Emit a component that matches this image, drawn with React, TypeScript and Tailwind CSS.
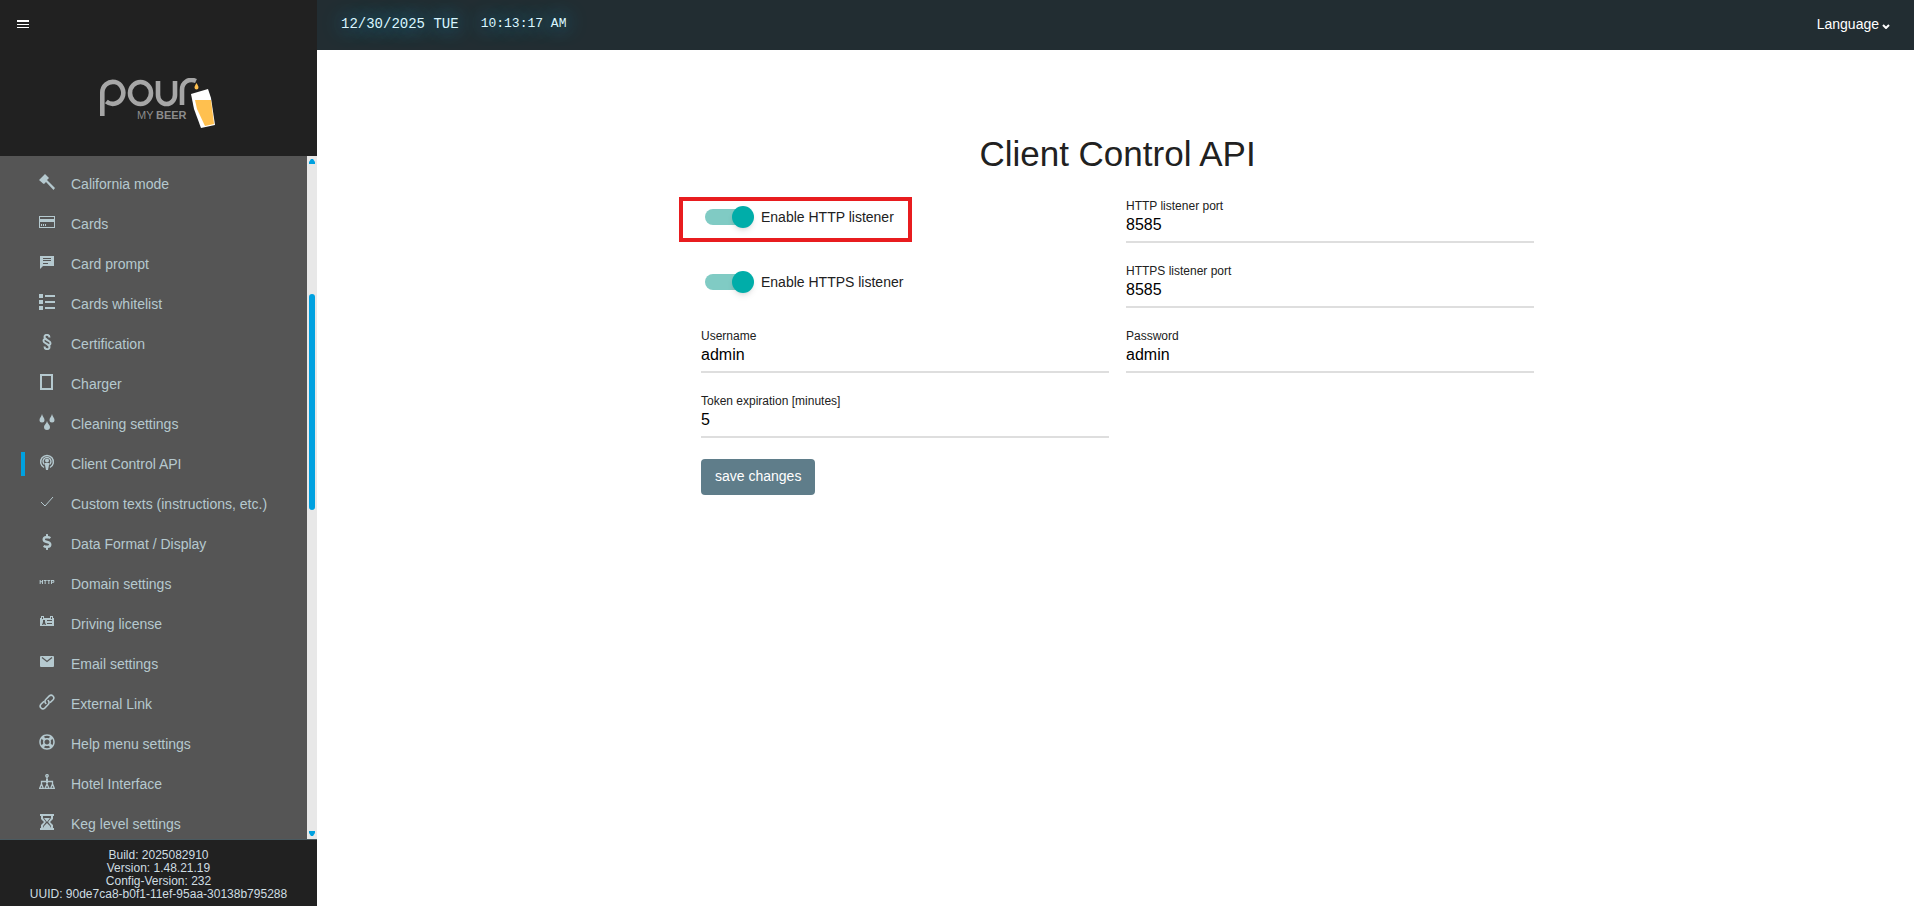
import { useState } from "react";
import type { ComponentType, ReactNode } from "react";
import { FaDollarSign, FaRegLifeRing } from "react-icons/fa";
import { MdHttp } from "react-icons/md";

interface IconProps {
  className?: string;
}

interface MenuItem {
  label: string;
  icon: ComponentType<IconProps>;
}

function Svg({ children, className }: { children: ReactNode; className?: string }) {
  return (
    <svg className={className} viewBox="0 0 16 16" fill="currentColor" aria-hidden="true">
      {children}
    </svg>
  );
}

const GavelIcon = (p: IconProps) => (
  <Svg {...p}>
    <path d="M6 0l4 4-2 2 8 8-1.500 2L7 8 5 10 4 9.500 0 6z" />
  </Svg>
);

const CardIcon = (p: IconProps) => (
  <Svg {...p}>
    <path fillRule="evenodd" d="M0 2h16v12H0zM1 3v2h14V3zM1 8v5h14V8z" />
    <path d="M2 10h1v2H2zM4 10h1v2H4zM6 10h1v2H6z" />
  </Svg>
);

const ChatIcon = (p: IconProps) => (
  <Svg {...p}>
    <path fillRule="evenodd" d="M1 2h14v10H4l-3 3zM4 4v1h8V4zM4 6v1h8V6zM4 9v1h5V9z" />
  </Svg>
);

const ListIcon = (p: IconProps) => (
  <Svg {...p}>
    <path d="M0 0h4v4H0zM6 1h10v2H6zM0 6h4v4H0zM6 7h10v2H6zM0 12h4v4H0zM6 13h10v2H6z" />
  </Svg>
);

const SectionIcon = (p: IconProps) => (
  <Svg {...p}>
    <g fill="none" stroke="currentColor" strokeWidth="2">
      <path d="M10.500 3.500C10.500 0 5.500 0 5.500 3S11.500 6.500 11.500 9 9.500 11 8.500 11" />
      <path d="M5.500 12.500c0 3.500 5 3.500 5 .5S4.500 9.500 4.500 7 6.500 5 7.500 5" />
    </g>
  </Svg>
);

const ChargerIcon = (p: IconProps) => (
  <Svg {...p}>
    <path fillRule="evenodd" d="M1 0h13v16H1zM3 2v12h9V2z" />
  </Svg>
);

const DropsIcon = (p: IconProps) => (
  <Svg {...p}>
    <path d="M3 0c.5 2.500 2.500 4 2.500 6a2.500 2.500 0 0 1-5 0C.5 4 2.500 2.500 3 0zM13 0c.5 2.500 2.500 4 2.500 6a2.500 2.500 0 0 1-5 0c0-2 2-3.500 2.500-6zM8 7c.5 2.500 3 4 3 6a3 3 0 0 1-6 0c0-2 2.500-3.500 3-6z" />
  </Svg>
);

const PodcastIcon = (p: IconProps) => (
  <Svg {...p}>
    <g fill="none" stroke="currentColor" strokeWidth="1.4">
      <path d="M5 13.500A6.400 6.400 0 1 1 11 13.500" />
      <path d="M5.500 10.500a4 4 0 1 1 5 0" />
    </g>
    <circle cx="8" cy="6.5" r="2" />
    <path d="M6 9h4v2l-1 5H7l-1-5z" />
  </Svg>
);

const CheckIcon = (p: IconProps) => (
  <Svg {...p}>
    <path d="M2 8l4 4 8-9" fill="none" stroke="currentColor" />
  </Svg>
);

const LicenseIcon = (p: IconProps) => (
  <Svg {...p}>
    <path
      fillRule="evenodd"
      d="M1 4h1V2h3v2h6V2h3v2h1v8H1zM3 3v2h1V3zM12 3v2h1V3zM4 6v2l-1 3h1l1-1 1 1h1L6 8V6zM8 6v1h5V6zM8 9v1h5V9z"
    />
  </Svg>
);

const MailIcon = (p: IconProps) => (
  <Svg {...p}>
    <rect x="1" y="2" width="14" height="11" rx="1" />
    <path d="M3 3.500l5 4 5-4" fill="none" stroke="#555" strokeWidth="1.2" />
  </Svg>
);

const LinkIcon = (p: IconProps) => (
  <Svg {...p}>
    <g fill="none" stroke="currentColor" strokeWidth="1.6" strokeLinecap="round">
      <path d="M6.800 9.500C5.500 8 5.800 6.500 7 5.300l3.300-3.400c2.500-2.200 6 1.200 3.800 3.800L11.500 8.300" />
      <path d="M9.200 6.500c1.300 1.500 1 3-.2 4.200l-3.300 3.400c-2.500 2.200-6-1.200-3.800-3.800L4.500 7.700" />
    </g>
  </Svg>
);

const HotelIcon = (p: IconProps) => (
  <Svg {...p}>
    <g fill="none" stroke="currentColor" strokeWidth="1.3">
      <circle cx="8" cy="1.8" r="1.2" />
      <path d="M8 3v9M2.500 11V7.500h11V11M2.500 10L.7 14.300h3.600zM13.500 10l-1.800 4.300h3.600zM8 10l-2 4.300h4z" />
    </g>
    <path d="M7 5h2v4H7z" />
  </Svg>
);

const HourglassIcon = (p: IconProps) => (
  <Svg {...p}>
    <path
      fillRule="evenodd"
      d="M1 0h14v2h-1v3l-3 3 3 3v3h1v2H1v-2h1v-3l3-3-3-3V2H1zM4 2v2l3 4-3 4v2h8v-2L9 8l3-4V2z"
    />
    <path d="M5 4h6L8 8zM4 14l1-2 3-3 3 3 1 2z" />
  </Svg>
);

const menu: MenuItem[] = [
  { label: "California mode", icon: GavelIcon },
  { label: "Cards", icon: CardIcon },
  { label: "Card prompt", icon: ChatIcon },
  { label: "Cards whitelist", icon: ListIcon },
  { label: "Certification", icon: SectionIcon },
  { label: "Charger", icon: ChargerIcon },
  { label: "Cleaning settings", icon: DropsIcon },
  { label: "Client Control API", icon: PodcastIcon },
  { label: "Custom texts (instructions, etc.)", icon: CheckIcon },
  { label: "Data Format / Display", icon: FaDollarSign },
  { label: "Domain settings", icon: MdHttp },
  { label: "Driving license", icon: LicenseIcon },
  { label: "Email settings", icon: MailIcon },
  { label: "External Link", icon: LinkIcon },
  { label: "Help menu settings", icon: FaRegLifeRing },
  { label: "Hotel Interface", icon: HotelIcon },
  { label: "Keg level settings", icon: HourglassIcon },
];

function Logo() {
  return (
    <svg width="118" height="52" viewBox="100 78 118 52" role="img" aria-label="Pour My Beer">
      <g fill="none" stroke="#a6a6a6" strokeWidth="4.6">
        <path d="M102.300 116V93a10.500 11 0 1 1 4 8.500" />
        <ellipse cx="140.5" cy="93" rx="10.5" ry="11" />
        <path d="M158 81v14a8.500 9 0 0 0 17 0V81" />
        <path d="M182 105V90c0-8 7-12 14-9" />
      </g>
      <path d="M196.500 83c1 2 2 3 2 4.500a2 2 0 0 1-4 0c0-1.500 1-2.500 2-4.500z" fill="#ffc04f" />
      <path d="M191 94l17-5 3 9 4 27-14 3-7-19z" fill="#fff" />
      <path d="M195 100h16l3 24-9 2-8-17z" fill="#ffc04f" />
      <text x="137" y="119" fontSize="11" fill="#8c8c8c">
        MY
      </text>
      <text x="156" y="119" fontSize="11" fontWeight="700" fill="#8c8c8c">
        BEER
      </text>
    </svg>
  );
}

function Sidebar() {
  return (
    <aside className="flex w-[317px] shrink-0 flex-col bg-[#212121]">
      <div className="flex h-[156px] shrink-0 flex-col">
        <button type="button" aria-label="Toggle menu" className="ml-[17px] mt-5 h-2 w-3 text-white">
          <svg className="h-2 w-3" viewBox="0 0 12 8" fill="currentColor">
            <path d="M0 0h12v2H0zM0 4h12v1H0zM0 7h12v1H0z" />
          </svg>
        </button>
        <div className="mt-[50px] flex justify-center">
          <Logo />
        </div>
      </div>

      <div className="flex min-h-0 flex-1 border-b border-[#4a5a60] bg-[#555555]">
        <nav className="min-w-0 flex-1 overflow-hidden pt-2">
          <ul>
            {menu.map(({ label, icon: Icon }) => (
              <li key={label}>
                <a href="#" className="flex h-10 items-center pl-[21px] text-sm text-[#b5c9cf]">
                  <span
                    className={
                      label === "Client Control API" ? "h-6 w-1 bg-[#00a1e0]" : "h-6 w-1"
                    }
                  />
                  <Icon className="mb-1 ml-[14px] mr-4 h-4 w-4 shrink-0" />
                  {label}
                </a>
              </li>
            ))}
          </ul>
        </nav>
        <div className="flex w-[10px] flex-col items-center bg-[#e8e8e8] py-[3px]">
          <svg className="h-[5px] w-[6px] shrink-0" viewBox="0 0 6 5" fill="#00a1e0">
            <path d="M2 0h2l2 3v2H0V3z" />
          </svg>
          <div className="flex min-h-0 flex-1 flex-col items-center">
            <div className="grow-[130]" />
            <div className="w-[6px] grow-[216] rounded-full bg-[#00a1e0]" />
            <div className="grow-[321]" />
          </div>
          <svg className="h-[5px] w-[6px] shrink-0" viewBox="0 0 6 5" fill="#00a1e0">
            <path d="M0 0h6v2L4 5H2L0 2z" />
          </svg>
        </div>
      </div>

      <div className="h-[66px] shrink-0 pt-[9px] text-center text-xs leading-[13px] text-[#cfdde1]">
        <p>Build: 2025082910</p>
        <p>Version: 1.48.21.19</p>
        <p>Config-Version: 232</p>
        <p>UUID: 90de7ca8-b0f1-11ef-95aa-30138b795288</p>
      </div>
    </aside>
  );
}

interface ToggleProps {
  label: string;
  checked: boolean;
  onChange: (value: boolean) => void;
  marked?: boolean;
}

function Toggle({ label, checked, onChange, marked }: ToggleProps) {
  return (
    <div className="relative h-[46px]">
      <label className="flex h-10 items-center pl-1 text-sm text-[#212121]">
        <span className="relative mr-[7px] flex h-[22px] w-[49px] items-center">
          <input
            type="checkbox"
            role="switch"
            checked={checked}
            onChange={(e) => onChange(e.target.checked)}
            className="peer h-4 w-[46px] appearance-none rounded-full bg-gray-300 checked:bg-[#80cbc4]"
          />
          <span className="pointer-events-none absolute left-0 h-[22px] w-[22px] rounded-full bg-white shadow-md peer-checked:left-[27px] peer-checked:bg-[#00ada9]" />
        </span>
        {label}
      </label>
      {marked && (
        <div className="pointer-events-none absolute -left-[22px] top-0 h-[45px] w-[233px] border-4 border-[#e81c1f]" />
      )}
    </div>
  );
}

interface FieldProps {
  id: string;
  label: string;
  value: string;
  onChange: (value: string) => void;
}

function Field({ id, label, value, onChange }: FieldProps) {
  return (
    <div className="flex flex-col">
      <label htmlFor={id} className="text-xs leading-[18px] text-[#212121]">
        {label}
      </label>
      <input
        id={id}
        value={value}
        onChange={(e) => onChange(e.target.value)}
        className="h-7 border-b-2 border-[#dedede] pb-[6px] text-base text-black outline-none"
      />
    </div>
  );
}

export default function App() {
  const [http, setHttp] = useState(true);
  const [https, setHttps] = useState(true);
  const [httpPort, setHttpPort] = useState("8585");
  const [httpsPort, setHttpsPort] = useState("8585");
  const [username, setUsername] = useState("admin");
  const [password, setPassword] = useState("admin");
  const [expiration, setExpiration] = useState("5");

  return (
    <div className="flex h-screen bg-white font-['Liberation_Sans',Arial,sans-serif]">
      <Sidebar />

      <div className="flex min-w-0 flex-1 flex-col">
        <header className="flex h-[50px] shrink-0 items-center justify-between bg-[#222d32] pb-[2px] pl-6 pr-6">
          <div className="flex items-center gap-[22px] font-['Liberation_Mono',monospace] text-[#daf6ff] [text-shadow:0_0_20px_#0aafe6]">
            <span className="text-sm">12/30/2025 TUE</span>
            <span className="text-[13px]">10:13:17 AM</span>
          </div>
          <button type="button" className="flex items-center gap-[3px] text-sm text-white">
            Language
            <svg className="mt-1 h-[5px] w-2" viewBox="0 0 8 5" fill="none" stroke="currentColor" strokeWidth="2">
              <path d="M1 1l3 3 3-3" />
            </svg>
          </button>
        </header>

        <main className="flex-1 overflow-auto pl-1 pt-[84px]">
          <form className="mx-auto max-w-[833px]" onSubmit={(e) => e.preventDefault()}>
            <h1 className="mb-[23px] text-center text-[35px] leading-10 text-[#212121]">
              Client Control API
            </h1>
            <div className="grid grid-cols-2 gap-x-[17px] gap-y-[19px]">
              <Toggle label="Enable HTTP listener" checked={http} onChange={setHttp} marked />
              <Field id="http-port" label="HTTP listener port" value={httpPort} onChange={setHttpPort} />
              <Toggle label="Enable HTTPS listener" checked={https} onChange={setHttps} />
              <Field id="https-port" label="HTTPS listener port" value={httpsPort} onChange={setHttpsPort} />
              <Field id="username" label="Username" value={username} onChange={setUsername} />
              <Field id="password" label="Password" value={password} onChange={setPassword} />
              <Field
                id="expiration"
                label="Token expiration [minutes]"
                value={expiration}
                onChange={setExpiration}
              />
            </div>
            <button
              type="submit"
              className="mt-[21px] h-9 rounded bg-[#5f7d8a] px-[14px] pb-[2px] text-sm text-white"
            >
              save changes
            </button>
          </form>
        </main>
      </div>
    </div>
  );
}
